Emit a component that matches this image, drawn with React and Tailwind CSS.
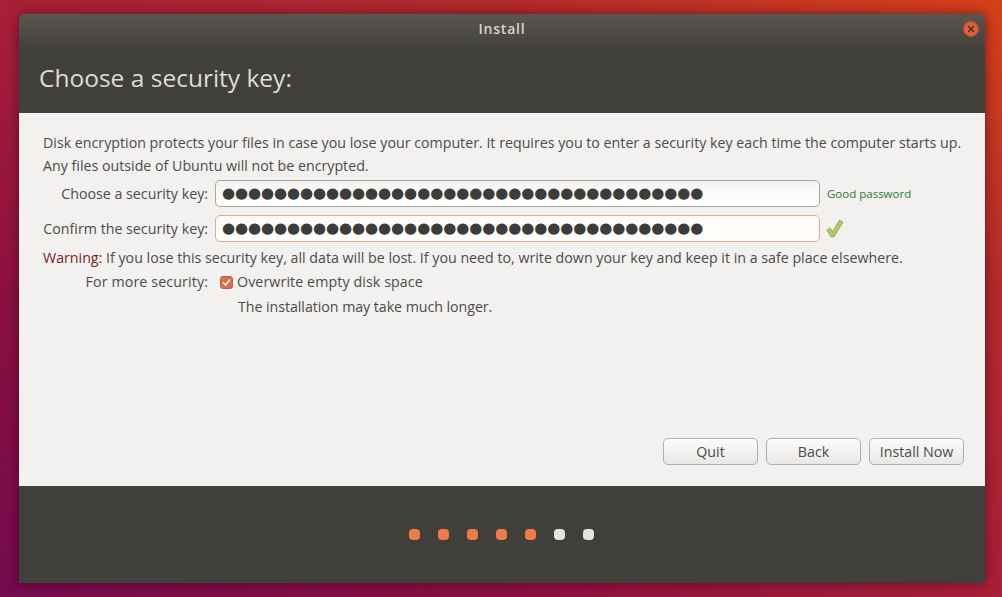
const font = { fontFamily: '"Open Sans", "Noto Sans", sans-serif' };
const dots = "●".repeat(37);

const steps = [1, 2, 3, 4, 5, 6, 7];

const Entry = ({ focused }) => (
  <div
    className={`w-[605px] h-[27px] rounded-[5px] border flex items-center pl-[6px] text-[#3d3c3a] font-['DejaVu_Sans',sans-serif] text-[15px] tracking-[-0.08px] leading-none whitespace-nowrap overflow-hidden ${
      focused
        ? "border-[#e9a78d] bg-[linear-gradient(#fffaf7,#ffffff)]"
        : "border-[#a9a6a1] bg-[linear-gradient(#f5f4f2,#ffffff)]"
    }`}
  >
    {dots}
  </div>
);

const Btn = ({ children }) => (
  <button className="w-[95px] h-[27px] rounded-[5px] border border-[#b1aeaa] bg-[linear-gradient(#fbfbfa,#e9e8e6)] text-[14.23px] text-[#4c4b47]">
    {children}
  </button>
);

const App = () => {
  return (
    <div
      className="w-[1002px] h-[597px] overflow-hidden pt-[14px] pl-[19px] bg-[linear-gradient(30deg,#740a4e_0%,#8a1040_25%,#a81f38_50%,#b32a2c_75%,#d4401a_100%)]"
      style={font}
    >
      <div className="w-[966px] h-[569px] flex flex-col rounded-t-[6px] overflow-hidden shadow-[0_0_12px_rgba(40,0,20,0.55)]">
        <div className="h-[99px] shrink-0 flex flex-col bg-[linear-gradient(#5a5750_0px,#47453f_28px,#403f3a_40px)]">
          <div className="relative h-[29px] flex items-center justify-center text-[14px] font-semibold tracking-[0.8px] text-[#d8d6d0]">
            Install
            <div className="absolute right-[6px] top-[7px] w-[16px] h-[16px] rounded-full bg-[#dd6239] border border-[#b04e2e] flex items-center justify-center">
              <svg width="8" height="8" viewBox="0 0 8 8">
                <path d="M1 1L7 7M7 1L1 7" stroke="#40251c" strokeWidth="1.1" />
              </svg>
            </div>
          </div>
          <h1 className="pl-[20px] mt-[3px] text-[24.5px] leading-[64px] h-[64px] text-[#dfddd8]">
            Choose a security key:
          </h1>
        </div>

        <div className="h-[373px] shrink-0 flex flex-col bg-[#f2f1f0] pl-[24px] pr-[20px] pt-[18px] pb-[21px] text-[14.23px] text-[#4c4b47]">
          <p className="leading-[23px] whitespace-nowrap">
            Disk encryption protects your files in case you lose your computer. It requires you to enter a security key each time the computer starts up.
            <br />
            Any files outside of Ubuntu will not be encrypted.
          </p>

          <div className="flex items-center mt-[3px] gap-[7px] h-[27px] -ml-[24px]">
            <span className="w-[189px] text-right whitespace-nowrap">Choose a security key:</span>
            <Entry />
            <span className="text-[11.5px] text-[#2f7a2c]">Good password</span>
          </div>
          <div className="flex items-center mt-[8px] gap-[7px] h-[27px] -ml-[24px]">
            <span className="w-[189px] text-right whitespace-nowrap">Confirm the security key:</span>
            <Entry focused />
            <svg width="18" height="19" viewBox="0 0 18 19" className="-ml-[1px]">
              <path
                d="M0.8 11L4.2 9L6.6 12.5L13.5 1L17 3.2L8 18L5 18Z"
                fill="#b5c76b"
                stroke="#8fa34c"
                strokeWidth="0.8"
              />
            </svg>
          </div>

          <p className="mt-[4px] leading-[23px] whitespace-nowrap">
            <span className="text-[#7d1a1f]">Warning:</span> If you lose this security key, all data will be lost. If you need to, write down your key and keep it in a safe place elsewhere.
          </p>
          <div className="flex items-center h-[24px] mt-[1px] -ml-[24px] gap-[12px]">
            <span className="w-[189px] text-right tracking-[0.12px]">For more security:</span>
            <span className="flex items-center gap-[4px] tracking-[0.1px]">
              <span className="w-[13px] h-[13px] rounded-[3px] bg-[#d4704a] border border-[#b9603e] flex items-center justify-center">
                <svg width="9" height="9" viewBox="0 0 9 9">
                  <path d="M1 4.5L3.5 7L8 1.5" fill="none" stroke="#fbf3ec" strokeWidth="1.6" />
                </svg>
              </span>
              Overwrite empty disk space
            </span>
          </div>
          <p className="pl-[195px] mt-[1px] leading-[23px] tracking-[-0.05px]">The installation may take much longer.</p>

          <div className="mt-auto flex justify-end gap-[8px] pr-[1px]">
            <Btn>Quit</Btn>
            <Btn>Back</Btn>
            <Btn>Install Now</Btn>
          </div>
        </div>

        <div className="flex-1 bg-[#403f3a] flex items-center justify-center gap-[18px] pr-[2px]">
          {steps.map((s) => (
            <span
              key={s}
              className={s <= 5 ? "w-[11px] h-[11px] rounded-[4px] bg-[#ef7c46]" : "w-[11px] h-[11px] rounded-[4px] bg-[#e4e3e0]"}
            />
          ))}
        </div>
      </div>
    </div>
  );
};

export default App;
